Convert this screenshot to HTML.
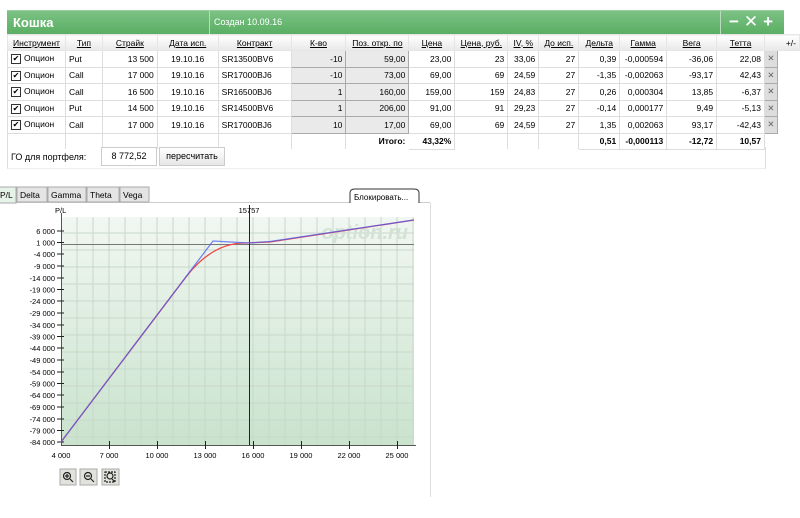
<!DOCTYPE html>
<html><head><meta charset="utf-8"><style>
body{margin:0;width:800px;height:518px;background:#fff;font-family:"Liberation Sans","DejaVu Sans",sans-serif;font-size:8.5px;color:#000;position:relative;overflow:hidden}
.hdr{position:absolute;left:7px;top:10px;width:777px;height:23px;background:linear-gradient(#7cc285,#5aae63);border-top:1px solid #9ad0a0}
.hdr .t{position:absolute;left:6px;top:4px;color:#fff;font-weight:bold;font-size:13px}
.hdr .s{position:absolute;left:202px;top:0;height:23px;border-left:1px solid #b8dcbc;color:#fff;font-size:9px;line-height:23px;padding-left:4px}
.hdr .ic{position:absolute;left:713px;top:0;width:64px;height:23px;border-left:1px solid #b8dcbc;color:#fff;font-weight:bold;font-size:17px;line-height:22px;letter-spacing:5px;padding-left:8px}
table{position:absolute;left:7px;top:34px;border-collapse:collapse;table-layout:fixed}
td{height:15.5px;padding:0 3px;border:1px solid #ddd;white-space:nowrap;overflow:hidden;vertical-align:middle}
tr.h td{background:linear-gradient(#fff,#e8e8e8);text-decoration:underline;text-align:center;height:15px;border-color:#e6e6e6}
.r{text-align:right}.g{background:#eaeaea;border-color:#aaa}
.cb{display:inline-block;width:8px;height:8px;border:1px solid #333;vertical-align:middle;margin-right:3px;font-size:8px;line-height:8px;text-align:center}
.x{background:#ddd;border:1px solid #aaa;color:#666;text-align:center;padding:0}
tr.tot td{border-color:#fff #ddd;font-weight:bold}
.btn{position:absolute;border:1px solid #ccc;background:linear-gradient(#fff,#e6e6e6);text-align:center;line-height:17px}
</style></head><body>
<div class="hdr"><span class="t">Кошка</span><span class="s">Создан 10.09.16</span><span class="ic">−✕+</span></div>
<table>
<colgroup><col style="width:58px"><col style="width:37px"><col style="width:55px"><col style="width:61px"><col style="width:73px"><col style="width:55px"><col style="width:63px"><col style="width:46px"><col style="width:53px"><col style="width:31px"><col style="width:40px"><col style="width:41px"><col style="width:47px"><col style="width:50px"><col style="width:48px"><col style="width:13px"><col style="width:22px"></colgroup>
<tr class="h"><td>Инструмент</td><td>Тип</td><td>Страйк</td><td>Дата исп.</td><td>Контракт</td><td>К-во</td><td>Поз. откр. по</td><td>Цена</td><td>Цена, руб.</td><td>IV, %</td><td>До исп.</td><td>Дельта</td><td>Гамма</td><td>Вега</td><td>Тетта</td><td colspan="2" style="text-decoration:none;text-align:right">+/-</td></tr>
<tr><td><span class="cb">✔</span>Опцион</td><td>Put</td><td class="r">13 500</td><td style="text-align:center">19.10.16</td><td>SR13500BV6</td><td class="r g">-10</td><td class="r g">59,00</td><td class="r">23,00</td><td class="r">23</td><td class="r">33,06</td><td class="r">27</td><td class="r">0,39</td><td class="r">-0,000594</td><td class="r">-36,06</td><td class="r">22,08</td><td class="x">✕</td><td style="border:0"></td></tr>
<tr><td><span class="cb">✔</span>Опцион</td><td>Call</td><td class="r">17 000</td><td style="text-align:center">19.10.16</td><td>SR17000BJ6</td><td class="r g">-10</td><td class="r g">73,00</td><td class="r">69,00</td><td class="r">69</td><td class="r">24,59</td><td class="r">27</td><td class="r">-1,35</td><td class="r">-0,002063</td><td class="r">-93,17</td><td class="r">42,43</td><td class="x">✕</td><td style="border:0"></td></tr>
<tr><td><span class="cb">✔</span>Опцион</td><td>Call</td><td class="r">16 500</td><td style="text-align:center">19.10.16</td><td>SR16500BJ6</td><td class="r g">1</td><td class="r g">160,00</td><td class="r">159,00</td><td class="r">159</td><td class="r">24,83</td><td class="r">27</td><td class="r">0,26</td><td class="r">0,000304</td><td class="r">13,85</td><td class="r">-6,37</td><td class="x">✕</td><td style="border:0"></td></tr>
<tr><td><span class="cb">✔</span>Опцион</td><td>Put</td><td class="r">14 500</td><td style="text-align:center">19.10.16</td><td>SR14500BV6</td><td class="r g">1</td><td class="r g">206,00</td><td class="r">91,00</td><td class="r">91</td><td class="r">29,23</td><td class="r">27</td><td class="r">-0,14</td><td class="r">0,000177</td><td class="r">9,49</td><td class="r">-5,13</td><td class="x">✕</td><td style="border:0"></td></tr>
<tr><td><span class="cb">✔</span>Опцион</td><td>Call</td><td class="r">17 000</td><td style="text-align:center">19.10.16</td><td>SR17000BJ6</td><td class="r g">10</td><td class="r g">17,00</td><td class="r">69,00</td><td class="r">69</td><td class="r">24,59</td><td class="r">27</td><td class="r">1,35</td><td class="r">0,002063</td><td class="r">93,17</td><td class="r">-42,43</td><td class="x">✕</td><td style="border:0"></td></tr>
<tr class="tot"><td style="border-left-color:#ddd"></td><td></td><td></td><td></td><td></td><td></td><td class="r" style="border-color:#fff">Итого:</td><td class="r" style="border:1px solid #ddd">43,32%</td><td></td><td></td><td style="border-right-color:#ddd"></td><td class="r" style="border:1px solid #ddd">0,51</td><td class="r" style="border:1px solid #ddd">-0,000113</td><td class="r" style="border:1px solid #ddd">-12,72</td><td class="r" style="border:1px solid #ddd">10,57</td><td style="border:0"></td><td style="border:0"></td></tr>
</table>
<div style="position:absolute;left:7px;top:147px;width:757px;height:21px;border-left:1px solid #ddd;border-right:1px solid #ddd;border-bottom:1px solid #eee"></div>
<div style="position:absolute;left:11px;top:152px;font-size:9px">ГО для портфеля:</div>
<div class="btn" style="left:101px;top:147px;width:54px;background:#fff;font-size:9px">8 772,52</div>
<div class="btn" style="left:159px;top:147px;width:64px;font-size:9px">пересчитать</div>
<svg style="position:absolute;left:0;top:183px" width="440" height="335" font-family="Liberation Sans,sans-serif" font-size="7.5">
<defs><linearGradient id="bg" x1="0" y1="0" x2="0" y2="1"><stop offset="0" stop-color="#f1f7f2"/><stop offset="1" stop-color="#c9e3cd"/></linearGradient></defs>
<line x1="0" y1="19.5" x2="430" y2="19.5" stroke="#ccc"/>
<line x1="430.5" y1="20" x2="430.5" y2="314" stroke="#ddd"/>
<g font-size="8.5" stroke="#aaa">
<rect x="-2" y="4" width="18" height="16" fill="#e6f3e8"/><rect x="17" y="4" width="30" height="15" fill="#e4e4e4"/><rect x="48" y="4" width="38" height="15" fill="#e4e4e4"/><rect x="87" y="4" width="32" height="15" fill="#e4e4e4"/><rect x="120" y="4" width="29" height="15" fill="#e4e4e4"/>
<path d="M350 20 V10 Q350 6 355 6 H414 Q419 6 419 10 V20" fill="#fff" stroke="#333"/>
</g>
<g font-size="8.5"><text x="0" y="15">P/L</text><text x="20" y="15">Delta</text><text x="51" y="15">Gamma</text><text x="90" y="15">Theta</text><text x="123" y="15">Vega</text><text x="354" y="17" font-size="8">Блокировать...</text></g>
<rect x="61" y="34" width="353" height="228" fill="url(#bg)"/>
<g stroke="#c8d8ca" stroke-width="1">
<path d="M77 34V262M93 34V262M109 34V262M125 34V262M141 34V262M157 34V262M173 34V262M189 34V262M205 34V262M221 34V262M237 34V262M253 34V262M269 34V262M285 34V262M301 34V262M317 34V262M333 34V262M349 34V262M365 34V262M381 34V262M397 34V262M413 34V262"/>
<path d="M61 50H414M61 67H414M61 84H414M61 101H414M61 118H414M61 135H414M61 152H414M61 169H414M61 186H414M61 203H414M61 220H414M61 237H414M61 254H414"/>
</g>
<text x="408" y="56" text-anchor="end" font-size="20" font-style="italic" font-weight="bold" fill="#d4e2d6">option.ru</text>
<line x1="61" y1="61.5" x2="414" y2="61.5" stroke="#777"/>
<line x1="249.5" y1="22" x2="249.5" y2="262" stroke="#222"/>
<text x="249" y="30" text-anchor="middle">15757</text>
<text x="55" y="30">P/L</text>
<line x1="61.5" y1="30" x2="61.5" y2="262" stroke="#555"/>
<line x1="61" y1="262.5" x2="416" y2="262.5" stroke="#555"/>
<g stroke="#222">
<path d="M57 48H64M57 59.5H64M57 71H64M57 83H64M57 95H64M57 106.5H64M57 118H64M57 130H64M57 142H64M57 153.5H64M57 165H64M57 177H64M57 189H64M57 200.5H64M57 212H64M57 224H64M57 236H64M57 247.5H64M57 259H64"/>
<path d="M109.5 258V266M157.5 258V266M205.5 258V266M253.5 258V266M301.5 258V266M349.5 258V266M397.5 258V266"/>
</g>
<g text-anchor="end">
<text x="55" y="51">6 000</text><text x="55" y="62.5">1 000</text><text x="55" y="74">-4 000</text><text x="55" y="86">-9 000</text><text x="55" y="98">-14 000</text><text x="55" y="109.5">-19 000</text><text x="55" y="121">-24 000</text><text x="55" y="133">-29 000</text><text x="55" y="145">-34 000</text><text x="55" y="156.5">-39 000</text><text x="55" y="168">-44 000</text><text x="55" y="180">-49 000</text><text x="55" y="192">-54 000</text><text x="55" y="203.5">-59 000</text><text x="55" y="215">-64 000</text><text x="55" y="227">-69 000</text><text x="55" y="239">-74 000</text><text x="55" y="250.5">-79 000</text><text x="55" y="262">-84 000</text>
</g>
<g text-anchor="middle"><text x="61" y="275">4 000</text><text x="109" y="275">7 000</text><text x="157" y="275">10 000</text><text x="205" y="275">13 000</text><text x="253" y="275">16 000</text><text x="301" y="275">19 000</text><text x="349" y="275">22 000</text><text x="397" y="275">25 000</text></g>
<path d="M61 259 L186 94 Q212 60 245 60 L270 59 L414 37" fill="none" stroke="#f04848" stroke-width="1.3"/>
<path d="M61 259 L213 58 L249 60 L270 58.5 L414 37" fill="none" stroke="#4a5ef0" stroke-width="1.3" opacity="0.75"/>
<g fill="#e2e2dc" stroke="#aaa"><rect x="60" y="286" width="16" height="16"/><rect x="80" y="286" width="17" height="16"/><rect x="102" y="286" width="17" height="16"/></g>
<g fill="none" stroke="#222" stroke-width="1.2"><circle cx="67" cy="293" r="3.5"/><path d="M70 296l3 3M65 293h4M67 291v4"/><circle cx="88" cy="293" r="3.5"/><path d="M91 296l3 3M86 293h4"/><rect x="105" y="289" width="10" height="10" stroke-dasharray="2 1"/><circle cx="110" cy="293" r="3"/><path d="M112 296l3 3"/></g>
</svg>
</body></html>
